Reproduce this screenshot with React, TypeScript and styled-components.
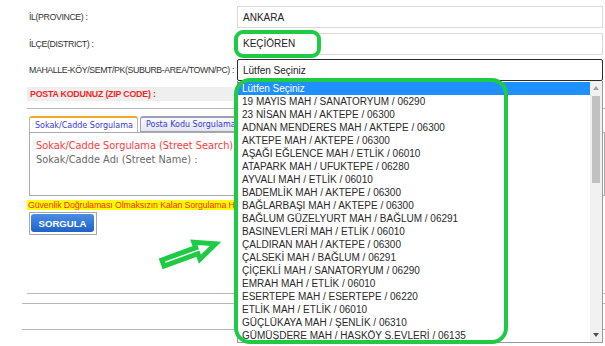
import styled, { createGlobalStyle } from "styled-components";

const GlobalStyle = createGlobalStyle`
  html, body {
    margin: 0;
    padding: 0;
    background: #ffffff;
  }
  body {
    width: 605px;
    height: 346px;
    overflow: hidden;
    font-family: "Liberation Sans", Arial, sans-serif;
  }
`;

const Page = styled.div`
  position: relative;
  width: 605px;
  height: 346px;
  overflow: hidden;
  box-sizing: border-box;
  padding: 6px 0 0 27px;
`;

const FormGrid = styled.div`
  display: grid;
  grid-template-columns: 208px 366px;
  grid-template-rows: 22px 22px 22px;
  column-gap: 2px;
  row-gap: 4.5px;
`;

const Label = styled.div`
  display: flex;
  align-items: center;
  padding-left: 2px;
  font-size: 8.8px;
  letter-spacing: -0.4px;
  color: #333333;
  white-space: nowrap;
  overflow: hidden;
`;

const TextBox = styled.div<{ $focused?: boolean }>`
  box-sizing: border-box;
  height: 22px;
  display: flex;
  align-items: center;
  padding-left: 5px;
  font-size: 10px;
  color: #222222;
  border: 1px solid ${(p) => (p.$focused ? "#2b2b2b" : "#d9d9d9")};
  border-radius: ${(p) => (p.$focused ? "2px" : "0")};
`;

const ZipRow = styled.div`
  display: grid;
  grid-template-columns: 208px 366px;
  column-gap: 2px;
  margin-top: 6px;
`;

const ZipLabel = styled.div`
  height: 14px;
  display: flex;
  align-items: center;
  padding-left: 3px;
  background: #efefef;
  color: #ff1f1f;
  font-weight: bold;
  font-size: 8.8px;
  letter-spacing: -0.2px;
  white-space: nowrap;
`;

const Rule = styled.div<{ $top: number; $shift?: number }>`
  height: 1px;
  background: #b8b8b8;
  margin-top: ${(p) => p.$top}px;
  margin-left: ${(p) => -(p.$shift ?? 0)}px;
`;

const TabStrip = styled.div`
  display: flex;
  gap: 2px;
  margin-top: 7px;
  padding-left: 2px;
  height: 16px;
`;

const Tab = styled.div<{ $active?: boolean }>`
  box-sizing: border-box;
  height: 16px;
  padding: 0 5px;
  display: flex;
  align-items: center;
  font-family: "DejaVu Sans", Verdana, sans-serif;
  font-size: 8px;
  color: #3a3ad6;
  white-space: nowrap;
  border: 1px solid ${(p) => (p.$active ? "#b7b7c4" : "#9ea0b8")};
  border-top: 2px solid ${(p) => (p.$active ? "#f5a623" : "#9ea0b8")};
  border-bottom: ${(p) => (p.$active ? "none" : "1px solid #9ea0b8")};
  border-radius: 3px 3px 0 0;
  background: ${(p) =>
    p.$active ? "#ffffff" : "linear-gradient(#fafafe, #e4e4ee)"};
  width: ${(p) => (p.$active ? "109px" : "auto")};
`;

const Panel = styled.div`
  box-sizing: border-box;
  height: 64px;
  margin-left: 2px;
  border: 1px solid #aaaaaa;
  padding: 6px 0 0 6px;
  font-family: "DejaVu Sans", Verdana, sans-serif;
  font-size: 9.8px;
  line-height: 14px;
  white-space: nowrap;
`;

const PanelTitle = styled.div`
  color: #ff3b3b;
`;

const PanelField = styled.div`
  color: #6a6a6a;
`;

const Warning = styled.div`
  margin-top: 4px;
  height: 10px;
  width: 206px;
  line-height: 10px;
  background: #ffff00;
  color: #ff1f1f;
  font-size: 8.8px;
  letter-spacing: -0.1px;
  padding-left: 1px;
  white-space: nowrap;
  overflow: hidden;
`;

const ButtonFrame = styled.div`
  box-sizing: border-box;
  width: 68px;
  height: 23px;
  margin: 2px 0 0 2px;
  padding: 1px 2px 2px 1px;
  border: 1px solid #a8a8a8;
`;

const SearchButton = styled.div`
  height: 100%;
  border-radius: 3px;
  background: linear-gradient(#4a8ee6, #1f62c9);
  color: #ffffff;
  font-weight: bold;
  font-size: 9.6px;
  display: flex;
  align-items: center;
  justify-content: center;
`;

const DropList = styled.div`
  position: absolute;
  left: 237px;
  top: 81px;
  width: 366px;
  height: 262px;
  box-sizing: border-box;
  border: 1px solid #9a9a9a;
  border-top: none;
  background: #ffffff;
  display: flex;
`;

const Options = styled.div`
  flex: 1;
  padding-top: 1px;
`;

const Option = styled.div<{ $selected?: boolean }>`
  height: 13px;
  line-height: 13px;
  padding-left: 4px;
  font-size: 10px;
  white-space: nowrap;
  color: ${(p) => (p.$selected ? "#ffffff" : "#2a2a2a")};
  background: ${(p) => (p.$selected ? "#1e90ff" : "transparent")};
`;

const ScrollTrack = styled.div`
  width: 12px;
  background: #f1f1f1;
  display: flex;
  flex-direction: column;
  align-items: center;
`;

const ScrollArrow = styled.div<{ $down?: boolean }>`
  width: 0;
  height: 0;
  margin: ${(p) => (p.$down ? "auto 0 5px" : "5px 0 0")};
  border-left: 3.5px solid transparent;
  border-right: 3.5px solid transparent;
  border-bottom: ${(p) => (p.$down ? "none" : "4px solid #a3a3a3")};
  border-top: ${(p) => (p.$down ? "4px solid #505050" : "none")};
`;

const ScrollThumb = styled.div`
  width: 8px;
  height: 87px;
  margin-top: 6px;
  background: #c1c1c1;
`;

const Ring = styled.div<{
  $x: number;
  $y: number;
  $w: number;
  $h: number;
  $r: number;
}>`
  position: absolute;
  left: ${(p) => p.$x}px;
  top: ${(p) => p.$y}px;
  width: ${(p) => p.$w}px;
  height: ${(p) => p.$h}px;
  box-sizing: border-box;
  border: 4px solid #1fcb45;
  border-radius: ${(p) => p.$r}px;
  pointer-events: none;
`;

const Arrow = styled.svg`
  position: absolute;
  left: 155px;
  top: 232px;
  width: 72px;
  height: 40px;
  overflow: visible;
`;

const options = [
  "Lütfen Seçiniz",
  "19 MAYIS MAH / SANATORYUM / 06290",
  "23 NİSAN MAH / AKTEPE / 06300",
  "ADNAN MENDERES MAH / AKTEPE / 06300",
  "AKTEPE MAH / AKTEPE / 06300",
  "AŞAĞI EĞLENCE MAH / ETLİK / 06010",
  "ATAPARK MAH / UFUKTEPE / 06280",
  "AYVALI MAH / ETLİK / 06010",
  "BADEMLİK MAH / AKTEPE / 06300",
  "BAĞLARBAŞI MAH / AKTEPE / 06300",
  "BAĞLUM GÜZELYURT MAH / BAĞLUM / 06291",
  "BASINEVLERİ MAH / ETLİK / 06010",
  "ÇALDIRAN MAH / AKTEPE / 06300",
  "ÇALSEKİ MAH / BAĞLUM / 06291",
  "ÇİÇEKLİ MAH / SANATORYUM / 06290",
  "EMRAH MAH / ETLİK / 06010",
  "ESERTEPE MAH / ESERTEPE / 06220",
  "ETLİK MAH / ETLİK / 06010",
  "GÜÇLÜKAYA MAH / ŞENLİK / 06310",
  "GÜMÜŞDERE MAH / HASKÖY S.EVLERİ / 06135",
];

export default function App() {
  return (
    <>
      <GlobalStyle />
      <Page>
        <FormGrid>
          <Label>İL(PROVINCE) :</Label>
          <TextBox>ANKARA</TextBox>
          <Label>İLÇE(DISTRICT) :</Label>
          <TextBox>KEÇİÖREN</TextBox>
          <Label>MAHALLE-KÖY/SEMT/PK(SUBURB-AREA/TOWN/PC) :</Label>
          <TextBox $focused>Lütfen Seçiniz</TextBox>
        </FormGrid>
        <ZipRow>
          <ZipLabel>POSTA KODUNUZ (ZIP CODE) :</ZipLabel>
          <div />
        </ZipRow>
        <Rule $top={7} />
        <TabStrip>
          <Tab $active>Sokak/Cadde Sorgulama</Tab>
          <Tab>Posta Kodu Sorgulama</Tab>
        </TabStrip>
        <Panel>
          <PanelTitle>Sokak/Cadde Sorgulama (Street Search)</PanelTitle>
          <PanelField>Sokak/Cadde Adı (Street Name) :</PanelField>
        </Panel>
        <Warning>Güvenlik Doğrulaması Olmaksızın Kalan Sorgulama H</Warning>
        <ButtonFrame>
          <SearchButton>SORGULA</SearchButton>
        </ButtonFrame>
        <Rule $top={58} />
        <Rule $top={9} $shift={5} />
        <Rule $top={25} $shift={5} />

        <DropList>
          <Options>
            {options.map((o, i) => (
              <Option key={o} $selected={i === 0}>
                {o}
              </Option>
            ))}
          </Options>
          <ScrollTrack>
            <ScrollArrow />
            <ScrollThumb />
            <ScrollArrow $down />
          </ScrollTrack>
        </DropList>

        <Ring $x={234} $y={30} $w={87} $h={28} $r={9} />
        <Ring $x={234} $y={78} $w={274} $h={266} $r={16} />
        <Arrow viewBox="0 0 72 40">
          <g transform="translate(8 31) rotate(-20)">
            <polygon
              points="0,-3.2 36,-3.2 36,-9 56,0 36,9 36,3.2 0,3.2"
              fill="#ffffff"
              stroke="#1fcb45"
              strokeWidth="5"
              strokeLinejoin="miter"
            />
          </g>
        </Arrow>
      </Page>
    </>
  );
}
